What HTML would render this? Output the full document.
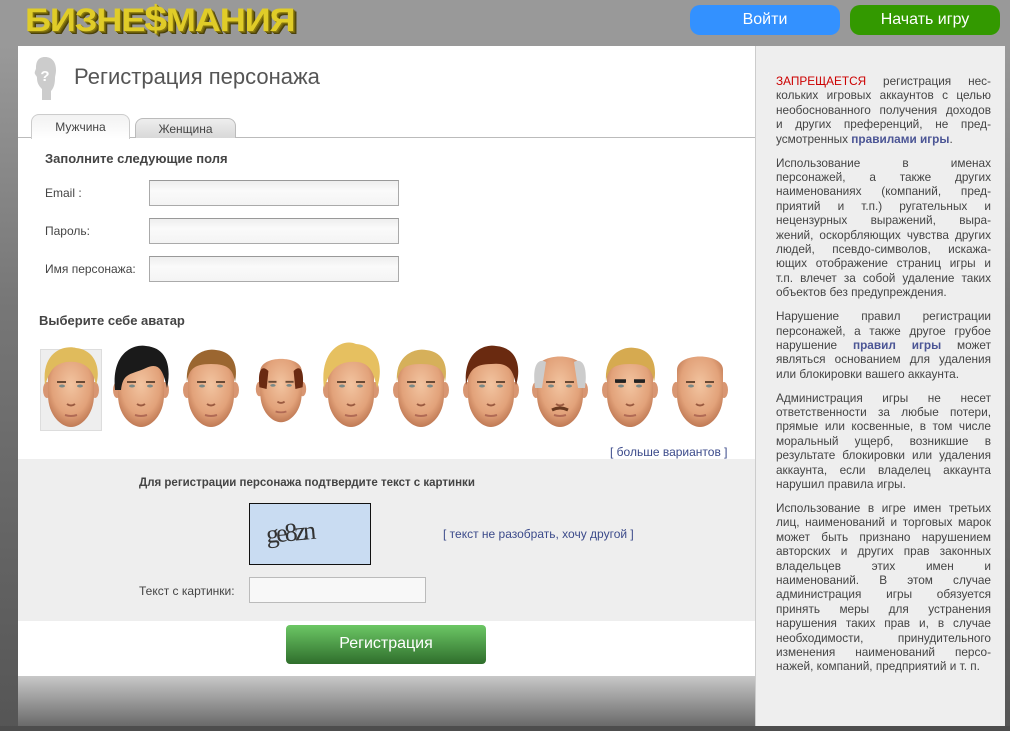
<!DOCTYPE html>
<html><head><meta charset="utf-8">
<style>
*{margin:0;padding:0;box-sizing:border-box}
body{width:1010px;height:731px;overflow:hidden;position:relative;font-family:"Liberation Sans",sans-serif;background:linear-gradient(#999 0,#999 46px,#777 300px,#555 731px)}
.abs{position:absolute}
#top{left:0;top:0;width:1010px;height:46px;background:#999}
.logo{left:25px;top:0px;font:900 32px/38px "Liberation Sans",sans-serif;color:#e0cc28;letter-spacing:-1px;text-shadow:1px 1px 0 #8a7a10,2px 2px 0 #6b5e0a,3px 3px 0 #4a400a;transform:scaleX(1.13);transform-origin:left}
.btn{top:5px;width:150px;height:30px;border-radius:10px;color:#fff;font-size:16px;line-height:30px;text-align:center}
#main{left:18px;top:46px;width:737px;height:680px;background:#fff}
#side{left:755px;top:46px;width:250px;height:680px;background:#eee;border-left:1px solid #ccc}
#bot{left:18px;top:676px;width:737px;height:50px;background:linear-gradient(#c8c8c8,#6a6a6a)}
#base{left:0;top:726px;width:1010px;height:5px;background:#4d4d4d}
.title{left:74px;top:64px;font-size:22px;color:#555}
.tab{height:24px;border:1px solid #ccc;border-bottom:none;border-radius:8px 8px 0 0;font-size:12px;color:#444;text-align:center;line-height:24px}
.lbl{font-size:12px;color:#444}
.inp{width:250px;height:26px;border:1px solid #aaa;border-top-color:#999;background:linear-gradient(#eee,#fafafa 40%,#f4f4f4)}
h3{position:absolute;font-size:13px;color:#444;font-weight:bold}
#side .t{position:absolute;left:20px;top:28px;width:215px;font-size:11.8px;line-height:14.4px;color:#444}
.j{text-align:justify;text-align-last:justify}
.p{margin-bottom:9.5px}
.r{color:#cc0000}
.b{color:#4b5595;font-weight:bold}
</style></head><body>
<div id="top" class="abs"></div>
<div class="abs logo">БИЗНЕ<span style="font-size:36px">$</span>МАНИЯ</div>
<div class="abs btn" style="left:690px;background:#3391ff">Войти</div>
<div class="abs btn" style="left:850px;background:#339900">Начать игру</div>

<div id="main" class="abs"></div>
<div id="bot" class="abs"></div>
<div id="base" class="abs"></div>

<svg class="abs" style="left:33px;top:56px" width="24" height="44" viewBox="0 0 24 44">
<path d="M12 1C5 1 3 6 3 12C3 14 1 16 2 18C3 20 4 20 4 22C4 28 7 31 9 33L9 44L18 44L18 35C21 32 22 27 22 22C22 20 23 18 23 14C23 6 19 1 12 1Z" fill="#ccc"/>
<text x="12" y="25" font-size="15" font-weight="bold" fill="#fff" text-anchor="middle" font-family="Liberation Sans">?</text>
</svg>
<div class="abs title">Регистрация персонажа</div>

<div class="abs" style="left:18px;top:137px;width:737px;height:1px;background:#bbb"></div>
<div class="abs tab" style="left:31px;top:114px;width:99px;height:25px;background:linear-gradient(#f2f2f2,#fff)">Мужчина</div>
<div class="abs tab" style="left:135px;top:118px;width:101px;height:20px;line-height:20px;background:linear-gradient(#eee,#d8d8d8);border-color:#bbb">Женщина</div>

<h3 style="left:45px;top:151px">Заполните следующие поля</h3>
<div class="abs lbl" style="left:45px;top:186px">Email :</div>
<div class="abs lbl" style="left:45px;top:224px">Пароль:</div>
<div class="abs lbl" style="left:45px;top:262px">Имя персонажа:</div>
<div class="abs inp" style="left:149px;top:180px"></div>
<div class="abs inp" style="left:149px;top:218px"></div>
<div class="abs inp" style="left:149px;top:256px"></div>

<h3 style="left:39px;top:313px">Выберите себе аватар</h3>
<div class="abs" style="left:40px;top:349px;width:62px;height:82px;background:#eee;border:1px solid #ddd"></div>
<svg class="abs" style="left:0;top:340px" width="755" height="100">
<defs>
<radialGradient id="sk" cx="50%" cy="40%" r="60%"><stop offset="0" stop-color="#f2c4a0"/><stop offset="0.7" stop-color="#e2a27a"/><stop offset="1" stop-color="#c07a55"/></radialGradient>
<g id="f">
<ellipse cx="-24" cy="50" rx="4" ry="8" fill="#d89672"/><ellipse cx="24" cy="50" rx="4" ry="8" fill="#d89672"/>
<path d="M-23 30C-23 12 23 12 23 30L23 55C23 75 10 87 0 87C-10 87-23 75-23 55Z" fill="url(#sk)"/>
<path d="M-14 42h9M5 42h9" stroke="#6a4a35" stroke-width="2"/>
<ellipse cx="-9" cy="46" rx="3" ry="1.5" fill="#7a8a88"/><ellipse cx="9" cy="46" rx="3" ry="1.5" fill="#7a8a88"/>
<path d="M-4 64q4 3 8 0" stroke="#9a5a40" stroke-width="2" fill="none"/>
<path d="M-6 75q6 2 12 0" stroke="#b06a55" stroke-width="2" fill="none"/>
</g>
</defs>
<g transform="translate(71,0)"><use href="#f"/><path d="M-26 45C-30 10 -5 5 5 8C25 10 30 30 25 45C22 30 15 20 -5 22C-20 25 -22 35 -26 45Z" fill="#e0bb5c"/></g>
<g transform="translate(141,0)"><use href="#f"/><path d="M-26 50C-30 10 -5 4 5 6C28 8 30 30 26 48C22 30 18 22 5 28C-10 35 -18 32 -20 50Z" fill="#1a1a1a"/></g>
<g transform="translate(211,0)"><use href="#f"/><path d="M-24 42C-26 14 -5 8 5 10C24 12 27 28 24 42C22 30 18 24 0 24C-18 24 -22 30 -24 42Z" fill="#9b6630"/></g>
<g transform="translate(281,4) scale(0.9)"><use href="#f"/><path d="M-24 48C-26 30 -22 22 -14 30L-16 50Z M24 48C26 30 22 22 14 30L16 50Z" fill="#6a2a12"/></g>
<g transform="translate(351,0)"><use href="#f"/><path d="M-27 48C-32 10 -8 -2 5 4C30 6 32 30 26 48C22 30 18 20 -2 22C-18 24 -22 35 -27 48Z" fill="#e6c060"/></g>
<g transform="translate(421,0)"><use href="#f"/><path d="M-24 42C-26 14 -5 8 5 10C24 12 27 28 24 42C22 30 18 24 0 24C-18 24 -22 30 -24 42Z" fill="#d6b05a"/></g>
<g transform="translate(491,0)"><use href="#f"/><path d="M-25 45C-28 10 -5 4 5 6C28 8 30 30 25 45C22 30 18 22 0 24C-18 24 -22 32 -25 45Z" fill="#6a2a10"/></g>
<g transform="translate(560,0)"><use href="#f"/><path d="M-25 48C-28 25 -22 18 -14 22L-18 48Z M25 48C28 25 22 18 14 22L18 48Z" fill="#ccc"/><path d="M-8 70q8-4 16 0" stroke="#6a3a20" stroke-width="3" fill="none"/></g>
<g transform="translate(630,0)"><use href="#f"/><path d="M-24 42C-26 12 -5 6 5 8C24 10 27 28 24 42C22 30 18 24 0 24C-18 24 -22 30 -24 42Z" fill="#d6aa50"/><path d="M-15 41h11M4 41h11" stroke="#222" stroke-width="3.5"/></g>
<g transform="translate(700,0)"><use href="#f"/></g>
</svg>
<div class="abs" style="left:610px;top:445px;font-size:12px;color:#3b4a8a">[ больше вариантов ]</div>

<div class="abs" style="left:18px;top:459px;width:737px;height:162px;background:#eee"></div>
<div class="abs" style="left:139px;top:477px;font-size:11.5px;font-weight:bold;color:#444">Для регистрации персонажа подтвердите текст с картинки</div>
<div class="abs" style="left:249px;top:503px;width:122px;height:62px;background:#c9dcf2;border:1px solid #111"></div>
<div class="abs" style="left:266px;top:518px;font:26px/30px 'Liberation Serif',serif;color:#333;letter-spacing:-3px;transform:rotate(-5deg)">ge8zn</div>
<div class="abs" style="left:443px;top:527px;font-size:12px;color:#3b4a8a">[ текст не разобрать, хочу другой ]</div>
<div class="abs lbl" style="left:139px;top:584px">Текст с картинки:</div>
<div class="abs inp" style="left:249px;top:577px;width:177px;background:#f8f8f8;border-color:#bbb"></div>
<div class="abs" style="left:286px;top:625px;width:200px;height:39px;border-radius:4px;background:linear-gradient(#6cc765,#2f6e2c);color:#fff;font-size:16px;line-height:38px;text-align:center">Регистрация</div>

<div id="side" class="abs"><div class="t">
<div class="p">
<div class="j"><span class="r">ЗАПРЕЩАЕТСЯ</span> регистрация нес-</div>
<div class="j">кольких игровых аккаунтов с целью</div>
<div class="j">необоснованного получения доходов</div>
<div class="j">и других преференций, не пред-</div>
<div>усмотренных <span class="b">правилами игры</span>.</div></div>
<div class="p">
<div class="j">Использование в именах</div>
<div class="j">персонажей, а также других</div>
<div class="j">наименованиях (компаний, пред-</div>
<div class="j">приятий и т.п.) ругательных и</div>
<div class="j">нецензурных выражений, выра-</div>
<div class="j">жений, оскорбляющих чувства других</div>
<div class="j">людей, псевдо-символов, искажа-</div>
<div class="j">ющих отображение страниц игры и</div>
<div class="j">т.п. влечет за собой удаление таких</div>
<div>объектов без предупреждения.</div></div>
<div class="p">
<div class="j">Нарушение правил регистрации</div>
<div class="j">персонажей, а также другое грубое</div>
<div class="j">нарушение <span class="b">правил игры</span> может</div>
<div class="j">являться основанием для удаления</div>
<div>или блокировки вашего аккаунта.</div></div>
<div class="p">
<div class="j">Администрация игры не несет</div>
<div class="j">ответственности за любые потери,</div>
<div class="j">прямые или косвенные, в том числе</div>
<div class="j">моральный ущерб, возникшие в</div>
<div class="j">результате блокировки или удаления</div>
<div class="j">аккаунта, если владелец аккаунта</div>
<div>нарушил правила игры.</div></div>
<div class="p">
<div class="j">Использование в игре имен третьих</div>
<div class="j">лиц, наименований и торговых марок</div>
<div class="j">может быть признано нарушением</div>
<div class="j">авторских и других прав законных</div>
<div class="j">владельцев этих имен и</div>
<div class="j">наименований. В этом случае</div>
<div class="j">администрация игры обязуется</div>
<div class="j">принять меры для устранения</div>
<div class="j">нарушения таких прав и, в случае</div>
<div class="j">необходимости, принудительного</div>
<div class="j">изменения наименований персо-</div>
<div>нажей, компаний, предприятий и т. п.</div></div>
</div></div>
</body></html>
